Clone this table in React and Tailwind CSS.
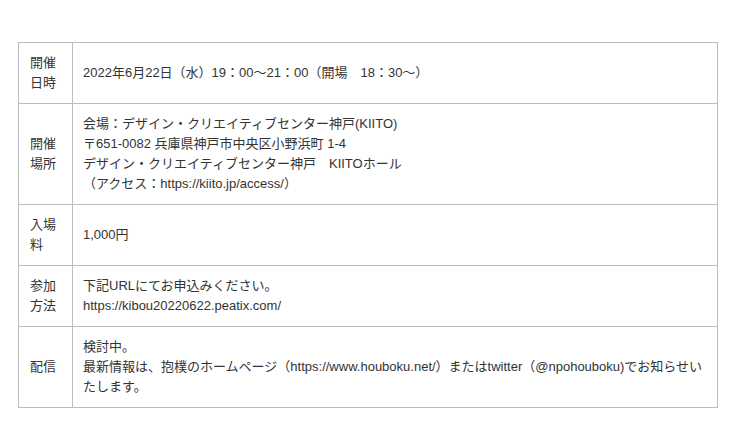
const rows = [
  { label: ['開催', '日時'], lines: ['2022年6月22日（水）19：00〜21：00（開場　18：30〜）'] },
  {
    label: ['開催', '場所'],
    lines: [
      '会場：デザイン・クリエイティブセンター神戸(KIITO)',
      '〒651-0082 兵庫県神戸市中央区小野浜町 1-4',
      'デザイン・クリエイティブセンター神戸　KIITOホール',
      '（アクセス：https://kiito.jp/access/）',
    ],
  },
  { label: ['入場', '料'], lines: ['1,000円'] },
  { label: ['参加', '方法'], lines: ['下記URLにてお申込みください。', 'https://kibou20220622.peatix.com/'] },
  {
    label: ['配信'],
    lines: [
      '検討中。',
      '最新情報は、抱樸のホームページ（https://www.houboku.net/）またはtwitter（@npohouboku)でお知らせいたします。',
    ],
  },
]

export default function App() {
  return (
    <div className="w-[740px] h-[448px] bg-white pt-[42px] pl-[18px] font-['Liberation_Sans','Noto_Sans_CJK_JP',sans-serif] text-[13px] leading-[20px] text-[#333]">
      <table className="w-[700px] border-collapse table-fixed">
        <colgroup>
          <col className="w-[54px]" />
          <col />
        </colgroup>
        <tbody>
          {rows.map((row, i) => (
            <tr key={i}>
              <td className="border border-[#bdbdbd] py-[10px] pl-[11px] pr-[8px] align-middle">
                {row.label.map((t, j) => (
                  <div key={j}>{t}</div>
                ))}
              </td>
              <td className="border border-[#bdbdbd] py-[10px] pl-[10px] pr-[12px] align-middle">
                {row.lines.map((t, j) => (
                  <div key={j}>{t}</div>
                ))}
              </td>
            </tr>
          ))}
        </tbody>
      </table>
    </div>
  )
}
